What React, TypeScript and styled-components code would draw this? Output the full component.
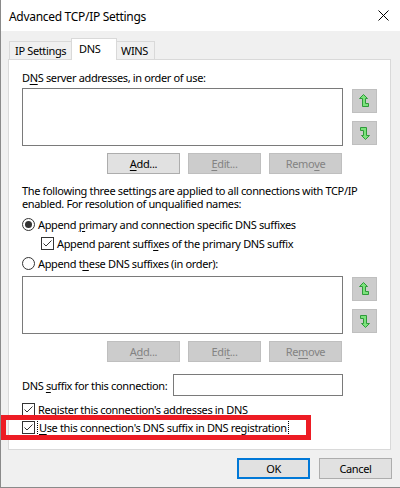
import React from "react";
import styled, { createGlobalStyle } from "styled-components";

const GlobalStyle = createGlobalStyle`
  html, body {
    margin: 0;
    padding: 0;
    background: #f0f0f0;
  }
  body {
    font-family: "Noto Sans", "Open Sans", sans-serif;
    font-size: 11px;
    letter-spacing: -0.35px;
    color: #000;
  }
`;

const Window = styled.div`
  position: relative;
  box-sizing: border-box;
  width: 400px;
  height: 488px;
  display: flex;
  flex-direction: column;
  background: #f0f0f0;
  border-left: 1px solid #8a8a8a;
  border-bottom: 1px solid #8a8a8a;
  overflow: hidden;
`;

const TitleBar = styled.div`
  height: 31px;
  flex-shrink: 0;
  display: flex;
  align-items: center;
  padding-left: 8px;
  padding-right: 11px;
  background: #fff;
`;

const Title = styled.span`
  font-size: 12px;
  letter-spacing: -0.3px;
  line-height: 15px;
  margin-top: 1px;
`;

const CloseIcon = styled.svg`
  margin-left: auto;
  width: 11px;
  height: 11px;
`;

const Body = styled.div`
  flex: 1;
  padding: 7px 9px 0 7px;
  display: flex;
  flex-direction: column;
`;

const TabStrip = styled.div`
  position: relative;
  z-index: 1;
  display: flex;
  align-items: flex-end;
  height: 22px;
  margin-bottom: -1px;
`;

const Tab = styled.div<{ $active?: boolean; $width: number; $pad: number }>`
  box-sizing: border-box;
  width: ${(p) => p.$width}px;
  height: ${(p) => (p.$active ? 22 : 18)}px;
  margin-bottom: ${(p) => (p.$active ? 0 : 1)}px;
  padding-left: ${(p) => p.$pad}px;
  padding-top: ${(p) => (p.$active ? 2 : 1)}px;
  line-height: 15px;
  white-space: nowrap;
  background: ${(p) => (p.$active ? "#fff" : "#f0f0f0")};
  border: 1px solid #d9d9d9;
  border-bottom: none;
  z-index: ${(p) => (p.$active ? 2 : 1)};
  &:first-child {
    margin-left: 1px;
  }
  & + & {
    margin-left: -1px;
  }
`;

const Panel = styled.div`
  box-sizing: border-box;
  height: 391px;
  display: flex;
  flex-direction: column;
  padding: 0 11px 0 13px;
  background: #fff;
  border: 1px solid #d9d9d9;
`;

const Line = styled.div<{ $top: number; $indent?: number }>`
  margin-top: ${(p) => p.$top}px;
  margin-left: ${(p) => p.$indent ?? 0}px;
  line-height: 15px;
  white-space: nowrap;
`;

const Paragraph = styled.p<{ $top: number }>`
  margin: ${(p) => p.$top}px 0 0;
  line-height: 13px;
  white-space: nowrap;
`;

const Key = styled.u`
  text-decoration: underline;
  text-underline-offset: 2px;
  text-decoration-thickness: 1px;
`;

const ListRow = styled.div<{ $top: number }>`
  margin-top: ${(p) => p.$top}px;
  display: flex;
  align-items: flex-start;
  gap: 9px;
`;

const ListBox = styled.div`
  box-sizing: border-box;
  width: 321px;
  height: 58px;
  border: 1px solid #7a7a7a;
  background: #fff;
`;

const ArrowColumn = styled.div`
  display: flex;
  flex-direction: column;
  gap: 8px;
  padding-top: 1px;
`;

const ArrowButton = styled.div`
  box-sizing: border-box;
  width: 25px;
  height: 24px;
  display: flex;
  align-items: center;
  justify-content: center;
  background: #cccccc;
  border: 1px solid #bfbfbf;
`;

const ArrowIcon = styled.svg<{ $down?: boolean }>`
  width: 11px;
  height: 14px;
  transform: ${(p) => (p.$down ? "rotate(180deg)" : "none")};
`;

const ButtonRow = styled.div<{ $top: number }>`
  margin-top: ${(p) => p.$top}px;
  width: 320px;
  display: flex;
  justify-content: flex-end;
  gap: 8px;
`;

const PushButton = styled.div<{ $disabled?: boolean; $default?: boolean }>`
  box-sizing: border-box;
  width: 73px;
  height: 21px;
  display: flex;
  align-items: center;
  justify-content: center;
  line-height: 15px;
  color: ${(p) => (p.$disabled ? "#838383" : "#000")};
  background: ${(p) => (p.$disabled ? "#cccccc" : "#e1e1e1")};
  border: ${(p) =>
    p.$default ? "2px solid #0078d7" : `1px solid ${p.$disabled ? "#bfbfbf" : "#adadad"}`};
`;

const OptionRow = styled.div<{ $top: number; $indent?: number }>`
  margin-top: ${(p) => p.$top}px;
  margin-left: ${(p) => p.$indent ?? 0}px;
  display: flex;
  align-items: center;
  gap: 3px;
  height: 15px;
  white-space: nowrap;
`;

const RadioMark = styled.span<{ $checked?: boolean }>`
  box-sizing: border-box;
  width: 13px;
  height: 13px;
  border: 1px solid #333;
  border-radius: 50%;
  display: flex;
  align-items: center;
  justify-content: center;
  background: #fff;
  &::after {
    content: "";
    width: 7px;
    height: 7px;
    border-radius: 50%;
    background: ${(p) => (p.$checked ? "#333" : "transparent")};
  }
`;

const CheckMark = styled.svg`
  width: 13px;
  height: 13px;
  flex-shrink: 0;
`;

const FocusText = styled.span`
  outline: 1px dotted #000;
  outline-offset: 0;
  padding: 0 1px;
  line-height: 15px;
`;

const SuffixRow = styled.div<{ $top: number }>`
  margin-top: ${(p) => p.$top}px;
  width: 321px;
  display: flex;
  align-items: center;
  line-height: 15px;
  white-space: nowrap;
`;

const TextBox = styled.div`
  box-sizing: border-box;
  margin-left: auto;
  width: 170px;
  height: 22px;
  border: 1px solid #7a7a7a;
  background: #fff;
`;

const Footer = styled.div`
  margin-top: 8px;
  margin-right: -1px;
  display: flex;
  justify-content: flex-end;
  gap: 9px;
`;

const Highlight = styled.div`
  position: absolute;
  left: 0;
  top: 415px;
  width: 310px;
  height: 25px;
  box-sizing: border-box;
  border: 5px solid #ed1c24;
  pointer-events: none;
`;

const Arrow = ({ down }: { down?: boolean }) => (
  <ArrowIcon $down={down} viewBox="0 0 11 14">
    <path
      d="M4.5 0.5 L8.5 4.5 L6.5 4.5 L6.5 9.5 L9.5 9.5 L9.5 12.5 L3.5 12.5 L3.5 4.5 L0.5 4.5 Z"
      fill="#7be27b"
      stroke="#2f9a3a"
      strokeWidth="1"
      strokeLinejoin="miter"
    />
  </ArrowIcon>
);

const Check = () => (
  <CheckMark viewBox="0 0 13 13">
    <rect x="0.5" y="0.5" width="12" height="12" fill="#fff" stroke="#333" />
    <path d="M2.5 6.5 L5 9 L10.5 3.5" fill="none" stroke="#333" strokeWidth="1" />
  </CheckMark>
);

const DnsList = ({ top }: { top: number }) => (
  <ListRow $top={top}>
    <ListBox />
    <ArrowColumn>
      <ArrowButton>
        <Arrow />
      </ArrowButton>
      <ArrowButton>
        <Arrow down />
      </ArrowButton>
    </ArrowColumn>
  </ListRow>
);

export default function App() {
  return (
    <>
      <GlobalStyle />
      <Window>
        <TitleBar>
          <Title>Advanced TCP/IP Settings</Title>
          <CloseIcon viewBox="0 0 11 11">
            <path d="M0.5 0.5 L10.5 10.5 M10.5 0.5 L0.5 10.5" stroke="#000" strokeWidth="1" />
          </CloseIcon>
        </TitleBar>
        <Body>
          <TabStrip>
            <Tab $width={63} $pad={5}>
              IP Settings
            </Tab>
            <Tab $active $width={46} $pad={7}>
              DNS
            </Tab>
            <Tab $width={39} $pad={4}>
              WINS
            </Tab>
          </TabStrip>
          <Panel>
            <Line $top={10}>
              D<Key>N</Key>S server addresses, in order of use:
            </Line>
            <DnsList top={3} />
            <ButtonRow $top={7}>
              <PushButton>
                <Key>A</Key>dd...
              </PushButton>
              <PushButton $disabled>
                <Key>E</Key>dit...
              </PushButton>
              <PushButton $disabled>
                Remo<Key>v</Key>e
              </PushButton>
            </ButtonRow>
            <Paragraph $top={10}>
              The following three settings are applied to all connections with TCP/IP
              <br />
              enabled. For resolution of unqualified names:
            </Paragraph>
            <OptionRow $top={7}>
              <RadioMark $checked />
              <span>
                Append <Key>p</Key>rimary and connection specific DNS suffixes
              </span>
            </OptionRow>
            <OptionRow $top={4} $indent={19}>
              <Check />
              <span>
                Append parent suffi<Key>x</Key>es of the primary DNS suffix
              </span>
            </OptionRow>
            <OptionRow $top={5}>
              <RadioMark />
              <span>
                Append t<Key>h</Key>ese DNS suffixes (in order):
              </span>
            </OptionRow>
            <DnsList top={5} />
            <ButtonRow $top={7}>
              <PushButton $disabled>
                A<Key>d</Key>d...
              </PushButton>
              <PushButton $disabled>
                Edi<Key>t</Key>...
              </PushButton>
              <PushButton $disabled>
                Re<Key>m</Key>ove
              </PushButton>
            </ButtonRow>
            <SuffixRow $top={12}>
              <span>
                DNS <Key>s</Key>uffix for this connection:
              </span>
              <TextBox />
            </SuffixRow>
            <OptionRow $top={6}>
              <Check />
              <span>
                Re<Key>g</Key>ister this connection's addresses in DNS
              </span>
            </OptionRow>
            <OptionRow $top={3}>
              <Check />
              <FocusText>
                <Key>U</Key>se this connection's DNS suffix in DNS registration
              </FocusText>
            </OptionRow>
          </Panel>
          <Footer>
            <PushButton $default>OK</PushButton>
            <PushButton>Cancel</PushButton>
          </Footer>
        </Body>
        <Highlight />
      </Window>
    </>
  );
}
